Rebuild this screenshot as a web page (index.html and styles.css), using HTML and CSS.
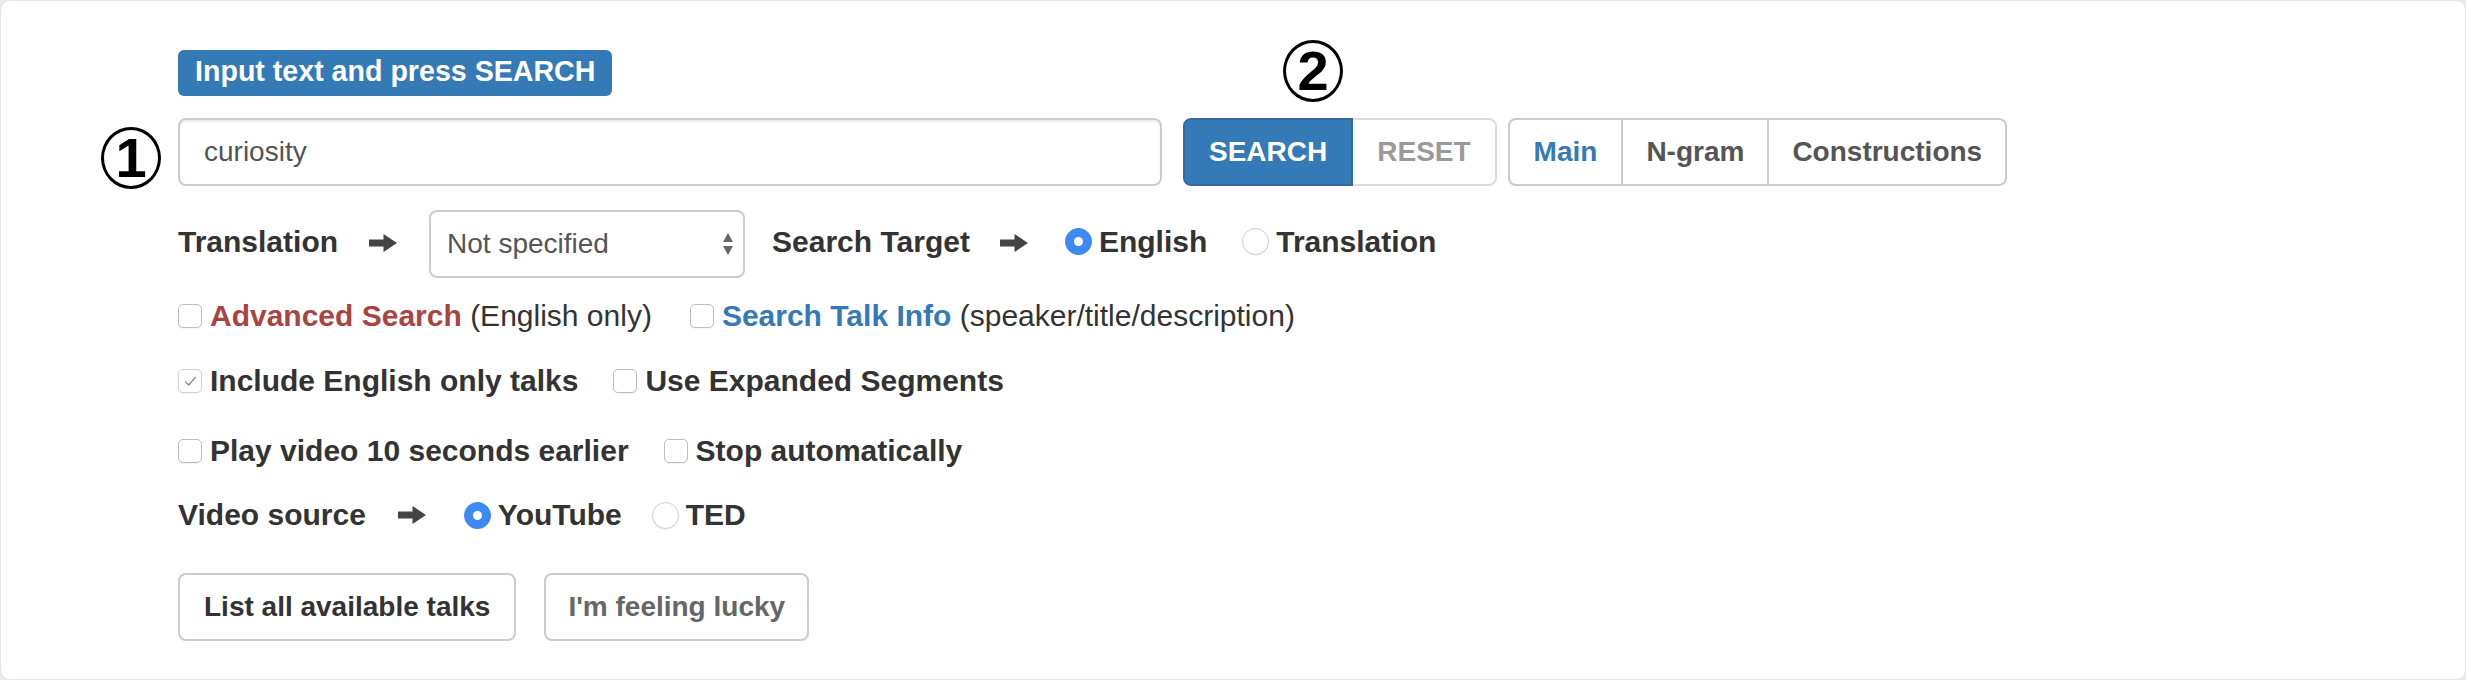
FILE: index.html
```html
<!DOCTYPE html>
<html lang="en">
<head>
<meta charset="utf-8">
<title>Search</title>
<link rel="stylesheet" href="styles.css">
</head>
<body>
<div class="panel">
  <div class="form">
    <span class="hint">Input text and press SEARCH</span>

    <div class="search-row">
      <input class="query" type="text" value="curiosity">
      <div class="btn-group">
        <button class="btn btn-primary">SEARCH</button>
        <button class="btn btn-muted">RESET</button>
      </div>
      <div class="btn-group tabs">
        <button class="btn btn-tab active">Main</button>
        <button class="btn btn-tab">N-gram</button>
        <button class="btn btn-tab">Constructions</button>
      </div>
    </div>

    <div class="row row-select">
      <span class="field-label">Translation</span>
      <svg class="arrow" viewBox="0 0 28 18" width="28" height="18"><path d="M0 5.5H14.5V0L28 9L14.5 18V12.5H0Z" fill="#444"/></svg>
      <div class="select">
        <span>Not specified</span>
        <svg viewBox="0 0 12 24" width="12" height="24"><path d="M1 10L6 1L11 10Z M1 14L11 14L6 23Z" fill="#666"/></svg>
      </div>
      <span class="field-label target">Search Target</span>
      <svg class="arrow" viewBox="0 0 28 18" width="28" height="18"><path d="M0 5.5H14.5V0L28 9L14.5 18V12.5H0Z" fill="#444"/></svg>
      <label class="opt first"><span class="radio on"></span><span>English</span></label>
      <label class="opt"><span class="radio"></span><span>Translation</span></label>
    </div>

    <div class="row">
      <label class="check"><span class="cb"></span><span><b class="red">Advanced Search</b> <span class="normal">(English only)</span></span></label>
      <label class="check wide"><span class="cb"></span><span><b class="blue">Search Talk Info</b> <span class="normal">(speaker/title/description)</span></span></label>
    </div>

    <div class="row r4">
      <label class="check"><span class="cb checked"><svg viewBox="0 0 24 24" width="17" height="17"><path d="M5 12.5L9.5 17L19 6" fill="none" stroke="#8a8a8a" stroke-width="1.8" stroke-linecap="round" stroke-linejoin="round"/></svg></span><span>Include English only talks</span></label>
      <label class="check"><span class="cb"></span><span>Use Expanded Segments</span></label>
    </div>

    <div class="row r5">
      <label class="check"><span class="cb"></span><span>Play video 10 seconds earlier</span></label>
      <label class="check"><span class="cb"></span><span>Stop automatically</span></label>
    </div>

    <div class="row r6">
      <span class="field-label">Video source</span>
      <svg class="arrow" viewBox="0 0 28 18" width="28" height="18"><path d="M0 5.5H14.5V0L28 9L14.5 18V12.5H0Z" fill="#444"/></svg>
      <label class="opt first"><span class="radio on"></span><span>YouTube</span></label>
      <label class="opt"><span class="radio"></span><span>TED</span></label>
    </div>

    <div class="row r7">
      <button class="btn btn-plain">List all available talks</button>
      <button class="btn btn-plain lucky">I'm feeling lucky</button>
    </div>
  </div>

  <span class="marker m1">1</span>
  <span class="marker m2">2</span>
</div>
</body>
</html>
```

FILE: styles.css
```css
* { box-sizing: border-box; }

html, body {
  margin: 0;
  padding: 0;
  background: #e9e9e9;
}

body {
  font-family: "Liberation Sans", Arial, Helvetica, sans-serif;
  color: #333;
}

.panel {
  position: relative;
  width: 2466px;
  height: 680px;
  background: #fff;
  border: 1px solid #e6e6e6;
  border-radius: 10px;
  padding: 49px 0 0 177px;
}

.form {
  display: flex;
  flex-direction: column;
  align-items: flex-start;
}

.hint {
  display: block;
  background: #337ab7;
  color: #fff;
  font-weight: bold;
  font-size: 28.6px;
  line-height: 29px;
  padding: 7px 17px 10px;
  border-radius: 6px;
}

.search-row {
  display: flex;
  align-items: center;
  margin-top: 22px;
}

.query {
  width: 984px;
  height: 68px;
  border: 2px solid #ccc;
  border-radius: 8px;
  padding: 0 24px;
  font-family: inherit;
  font-size: 28px;
  color: #555;
  box-shadow: inset 0 2px 2px rgba(0, 0, 0, 0.075);
  outline: none;
}

.btn-group {
  display: flex;
  margin-left: 21px;
}

.btn-group.tabs {
  margin-left: 11px;
}

.btn {
  height: 68px;
  padding: 0 24px;
  border: 2px solid #ccc;
  border-radius: 8px;
  background: #fff;
  font-family: inherit;
  font-weight: bold;
  font-size: 28px;
  color: #333;
  line-height: 40px;
}

.btn-group .btn + .btn {
  margin-left: -2px;
}

.btn-group .btn:not(:first-child) {
  border-top-left-radius: 0;
  border-bottom-left-radius: 0;
}

.btn-group .btn:not(:last-child) {
  border-top-right-radius: 0;
  border-bottom-right-radius: 0;
}

.btn-primary {
  background: #337ab7;
  border-color: #2e6da4;
  color: #fff;
  position: relative;
  z-index: 1;
}

.btn-muted {
  color: #9a9a9a;
  border-color: #ddd;
}

.btn-tab {
  color: #555;
}

.btn-tab.active {
  color: #337ab7;
}

.btn-tab + .btn-tab {
  padding: 0 23px;
}

.row {
  display: flex;
  align-items: center;
  height: 40px;
  margin-top: 18px;
  font-size: 30px;
  font-weight: bold;
}

.row-select {
  height: 68px;
  margin-top: 24px;
}

.row-select .field-label,
.row-select .opt {
  margin-bottom: 5px;
}

.row-select .arrow {
  margin-bottom: 3px;
}

.r4 { margin-top: 25px; }
.r5 { margin-top: 30px; }
.r6 { margin-top: 24px; }
.r7 { margin-top: 38px; height: 68px; }

.field-label {
  font-weight: bold;
}

.arrow {
  margin: 0 32px 0 31px;
  flex: none;
}

.select {
  width: 316px;
  height: 68px;
  border: 2px solid #ccc;
  border-radius: 8px;
  display: flex;
  align-items: center;
  justify-content: space-between;
  padding: 0 9px 0 16px;
  font-size: 28px;
  font-weight: normal;
  color: #555;
  margin-right: 27px;
}

.row-select .target + .arrow {
  margin: 0 37px 3px 30px;
}

.opt {
  display: flex;
  align-items: center;
  gap: 7px;
  margin-left: 35px;
}

.opt.first {
  margin-left: 0;
}

.r6 .arrow {
  margin: 0 38px 0 32px;
}

.r6 .opt:not(.first) {
  margin-left: 30px;
}

.radio {
  width: 27px;
  height: 27px;
  border-radius: 50%;
  background: #fff;
  border: 1px solid #cfcfcf;
  box-shadow: 0 1px 1px rgba(0, 0, 0, 0.06);
  flex: none;
  display: flex;
  align-items: center;
  justify-content: center;
}

.radio.on {
  background: #3d8af5;
  border-color: #3a84ec;
}

.radio.on::after {
  content: "";
  width: 9px;
  height: 9px;
  border-radius: 50%;
  background: #fff;
}

.check {
  display: flex;
  align-items: center;
  gap: 8px;
}

.check + .check {
  margin-left: 35px;
}

.check.wide {
  margin-left: 38px;
}

.cb {
  width: 24px;
  height: 24px;
  flex: none;
  border: 1.5px solid #bcbcbc;
  border-radius: 5px;
  background: #fff;
  box-shadow: 0 1px 1px rgba(0, 0, 0, 0.05);
  display: flex;
  align-items: center;
  justify-content: center;
}

.cb.checked {
  border-color: #d0d0d0;
}

.red { color: #a94442; }
.blue { color: #337ab7; }
.normal { font-weight: normal; }

.btn-plain + .btn-plain {
  margin-left: 28px;
}

.lucky {
  color: #666;
  padding: 0 22px;
}

.marker {
  position: absolute;
  width: 60px;
  height: 62px;
  border: 3px solid #000;
  border-radius: 50%;
  background: #fff;
  box-shadow: 0 0 0 2px #fff;
  display: flex;
  align-items: center;
  justify-content: center;
  font-family: "Liberation Sans", Arial, sans-serif;
  font-weight: bold;
  font-size: 56px;
  line-height: 1;
  color: #000;
}

.m1 {
  left: 100px;
  top: 126px;
}

.m2 {
  left: 1282px;
  top: 39px;
}
```
